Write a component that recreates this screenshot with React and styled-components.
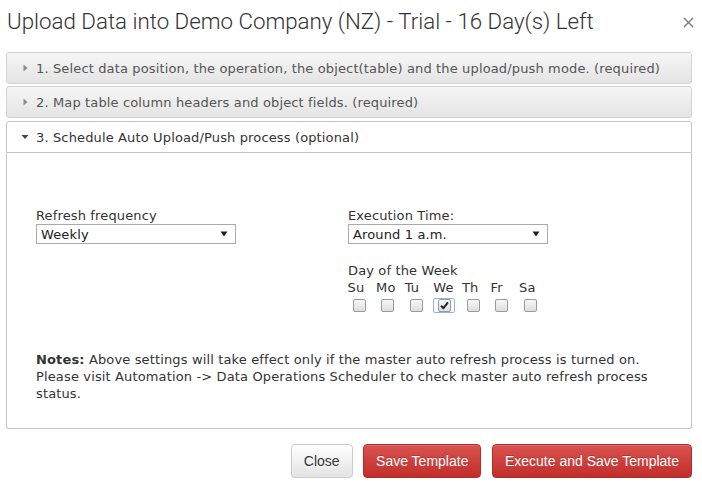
import React from "react";
import styled, { createGlobalStyle } from "styled-components";

const GlobalStyle = createGlobalStyle`
  html, body {
    margin: 0;
    padding: 0;
    background: #ffffff;
  }
  * {
    box-sizing: border-box;
  }
`;

const days = ["Su", "Mo", "Tu", "We", "Th", "Fr", "Sa"];

const steps = [
  { label: "1. Select data position, the operation, the object(table) and the upload/push mode. (required)", open: false },
  { label: "2. Map table column headers and object fields. (required)", open: false },
  { label: "3. Schedule Auto Upload/Push process (optional)", open: true },
];

const Arrow = ({ open }) =>
  open ? (
    <svg width="8" height="8" viewBox="0 0 8 8">
      <path d="M0.5 2 L7.5 2 L4 6 Z" fill="#454545" />
    </svg>
  ) : (
    <svg width="8" height="8" viewBox="0 0 8 8">
      <path d="M2.5 0.5 L6.5 4 L2.5 7.5 Z" fill="#8a8a8a" />
    </svg>
  );

const SelectArrow = () => (
  <svg width="8" height="6" viewBox="0 0 8 6">
    <path d="M0.5 0.5 L7.5 0.5 L4 5.5 Z" fill="#222" />
  </svg>
);

const Check = () => (
  <svg width="9" height="9" viewBox="0 0 9 9">
    <path d="M1 4.6 L3.4 7.2 L8 1.4" stroke="#222" strokeWidth="2" fill="none" strokeLinejoin="round" />
  </svg>
);

const FakeSelect = ({ value }) => (
  <Select>
    <span>{value}</span>
    <SelectArrow />
  </Select>
);

const App = () => {
  return (
    <>
      <GlobalStyle />
      <Dialog>
        <TitleBar>
          <Title>Upload Data into Demo Company (NZ) - Trial - 16 Day(s) Left</Title>
          <CloseX>
            <svg width="11" height="11" viewBox="0 0 11 11">
              <path d="M1 1 L10 10 M10 1 L1 10" stroke="#7a7a7a" strokeWidth="1.4" />
            </svg>
          </CloseX>
        </TitleBar>

        <Accordion>
          {steps.map((step, i) => (
            <Header key={i} open={step.open}>
              <Icon>
                <Arrow open={step.open} />
              </Icon>
              {step.label}
            </Header>
          ))}
          <Panel>
            <Columns>
              <Field>
                <Label>Refresh frequency</Label>
                <FakeSelect value="Weekly" />
              </Field>
              <Field>
                <Label>Execution Time:</Label>
                <FakeSelect value="Around 1 a.m." />
                <DayGroup>
                  <Label>Day of the Week</Label>
                  <DayGrid>
                    {days.map((d) => (
                      <DayName key={d}>{d}</DayName>
                    ))}
                    {days.map((d) => (
                      <BoxCell key={d + "-box"}>
                        <Box focused={d === "We"}>{d === "We" && <Check />}</Box>
                      </BoxCell>
                    ))}
                  </DayGrid>
                </DayGroup>
              </Field>
            </Columns>
            <Notes>
              <b>Notes:</b> Above settings will take effect only if the master auto refresh process is turned on.
              Please visit Automation -&gt; Data Operations Scheduler to check master auto refresh process status.
            </Notes>
          </Panel>
        </Accordion>

        <Footer>
          <Button>Close</Button>
          <Button primary>Save Template</Button>
          <Button primary>Execute and Save Template</Button>
        </Footer>
      </Dialog>
    </>
  );
};

export default App;

const Dialog = styled.div`
  width: 702px;
  padding: 0 10px 0 6px;
`;

const TitleBar = styled.div`
  display: flex;
  align-items: center;
  justify-content: space-between;
  height: 52px;
  padding: 0 1px 10px 1px;
`;

const Title = styled.h1`
  margin: 0;
  font-family: Roboto, "Liberation Sans", sans-serif;
  font-weight: 300;
  font-size: 22.3px;
  color: #333333;
  white-space: nowrap;
`;

const CloseX = styled.span`
  display: flex;
  margin-right: -3px;
  margin-top: 2px;
`;

const Accordion = styled.div`
  font-family: "DejaVu Sans", Verdana, sans-serif;
  font-size: 13px;
  line-height: 17px;
  letter-spacing: 0.14px;
`;

const Header = styled.div`
  display: flex;
  align-items: center;
  height: 32px;
  margin-top: ${(p) => (p.open ? "3px" : "2px")};
  padding: 0 7px 0 14px;
  border: 1px solid ${(p) => (p.open ? "#c5c5c5" : "#d3d3d3")};
  border-radius: ${(p) => (p.open ? "3px 3px 0 0" : "3px")};
  background: ${(p) => (p.open ? "#ffffff" : "linear-gradient(#f6f6f6 0%, #ededed 50%, #e4e4e4 100%)")};
  color: ${(p) => (p.open ? "#333333" : "#555555")};
  white-space: nowrap;

  &:first-child {
    margin-top: 0;
  }
`;

const Icon = styled.span`
  display: flex;
  width: 15px;
`;

const Panel = styled.div`
  border: 1px solid #c5c5c5;
  border-top: 0;
  border-radius: 0 0 3px 3px;
  padding: 54px 29px 26px 29px;
  color: #333333;
`;

const Columns = styled.div`
  display: grid;
  grid-template-columns: 312px 1fr;
`;

const Field = styled.div`
  display: flex;
  flex-direction: column;
  align-items: flex-start;
`;

const Label = styled.div`
  color: #333333;
`;

const Select = styled.div`
  display: flex;
  align-items: center;
  justify-content: space-between;
  width: 200px;
  height: 20px;
  padding: 0 7px 0 4px;
  border: 1px solid #a9a9a9;
  background: #ffffff;
  color: #222222;
`;

const DayGroup = styled.div`
  margin-top: 18px;
`;

const DayGrid = styled.div`
  display: grid;
  grid-template-columns: repeat(7, 28.6px);
  margin-left: -0.5px;
`;

const DayName = styled.div`
  color: #333333;
`;

const BoxCell = styled.div`
  display: flex;
  padding: 3px 0 0 5px;
`;

const Box = styled.span`
  position: relative;
  display: flex;
  align-items: center;
  justify-content: center;
  width: 13px;
  height: 13px;
  border: 1px solid #9a9a9a;
  border-radius: 2px;
  background: linear-gradient(#f7f7f7, #dedede);

  ${(p) =>
    p.focused &&
    `
    &::after {
      content: "";
      position: absolute;
      top: -2px;
      bottom: -2px;
      left: -6px;
      right: -5px;
      border: 1.5px solid #8fb4ef;
      border-radius: 2px;
    }
  `}
`;

const Notes = styled.p`
  margin: 39px 0 0 0;
  color: #333333;
`;

const Footer = styled.div`
  display: flex;
  justify-content: flex-end;
  gap: 10.5px;
  margin-top: 15px;
`;

const Button = styled.button`
  height: 34px;
  padding: 0 12px;
  font-family: "Liberation Sans", Arial, sans-serif;
  font-size: 14px;
  border-radius: 4px;
  cursor: pointer;
  border: 1px solid ${(p) => (p.primary ? "#b52b27" : "#cccccc")};
  color: ${(p) => (p.primary ? "#ffffff" : "#333333")};
  background: ${(p) =>
    p.primary ? "linear-gradient(#d9534f, #c12e2a)" : "linear-gradient(#ffffff, #e3e3e3)"};
  text-shadow: ${(p) => (p.primary ? "0 -1px 0 rgba(0,0,0,0.2)" : "0 1px 0 #fff")};
  box-shadow: inset 0 1px 0 rgba(255, 255, 255, 0.15), 0 1px 1px rgba(0, 0, 0, 0.075);
`;
